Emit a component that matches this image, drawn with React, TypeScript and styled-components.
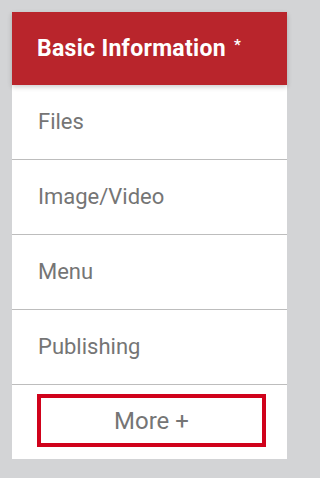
import styled, { createGlobalStyle } from "styled-components";

const GlobalStyle = createGlobalStyle`
  html, body {
    margin: 0;
    padding: 0;
    background: #d3d4d6;
    font-family: Roboto, "Liberation Sans", Arial, sans-serif;
  }
`;

const Page = styled.div`
  padding: 12px;
  width: 275px;
`;

const Panel = styled.nav`
  background: #ffffff;
  display: flex;
  flex-direction: column;
`;

const Header = styled.div`
  background: #b9252c;
  color: #ffffff;
  font-weight: 700;
  font-size: 23px;
  letter-spacing: 0.3px;
  height: 73px;
  display: flex;
  align-items: center;
  padding-left: 25px;
  box-sizing: border-box;
  box-shadow: 0 2px 5px rgba(0, 0, 0, 0.2);
  position: relative;
  z-index: 1;
`;

const Required = styled.span`
  font-size: 15px;
  margin-left: 8px;
  margin-bottom: 8px;
`;

const Item = styled.a`
  display: flex;
  align-items: center;
  height: 75px;
  box-sizing: border-box;
  padding-left: 26px;
  padding-bottom: 2px;
  color: #757575;
  font-size: 22px;
  border-bottom: 1px solid #bdbdbd;
  text-decoration: none;
  cursor: pointer;
`;

const Footer = styled.div`
  padding: 9px 21px 12px 25px;
`;

const MoreButton = styled.button`
  box-sizing: border-box;
  width: 229px;
  height: 53px;
  border: 4px solid #d0021b;
  background: #ffffff;
  color: #757575;
  font-family: inherit;
  font-size: 24px;
  cursor: pointer;
`;

const items = ["Files", "Image/Video", "Menu", "Publishing"];

export default function App() {
  return (
    <>
      <GlobalStyle />
      <Page>
        <Panel>
          <Header>
            Basic Information<Required>*</Required>
          </Header>
          {items.map((label) => (
            <Item key={label}>{label}</Item>
          ))}
          <Footer>
            <MoreButton>More +</MoreButton>
          </Footer>
        </Panel>
      </Page>
    </>
  );
}
